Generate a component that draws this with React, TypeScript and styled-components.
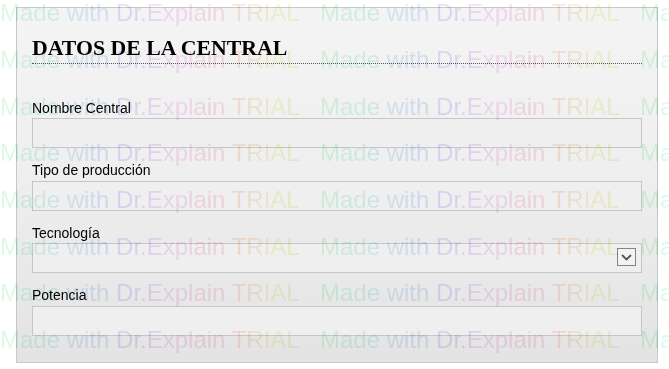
import styled, { createGlobalStyle } from "styled-components"

const GlobalStyle = createGlobalStyle`
  html, body {
    margin: 0;
    padding: 0;
    background: #ffffff;
  }
  body {
    font-family: "Liberation Sans", Arial, sans-serif;
    width: 669px;
    height: 369px;
    overflow: hidden;
    position: relative;
  }
`

const Page = styled.div`
  position: relative;
  width: 669px;
  height: 369px;
  box-sizing: border-box;
  padding-top: 7px;
  padding-left: 16px;
`

const Panel = styled.section`
  box-sizing: border-box;
  width: 642px;
  height: 356px;
  border: 1px solid #c8c8c8;
  background: linear-gradient(180deg, #f4f4f4 0%, #efefef 45%, #e3e3e3 100%);
  padding: 28px 15px 0 15px;
  display: flex;
  flex-direction: column;
`

const Title = styled.h2`
  margin: 0;
  font-family: "Liberation Serif", "Times New Roman", serif;
  font-weight: bold;
  font-size: 21.8px;
  line-height: 25px;
  color: #000;
  padding-bottom: 2px;
  border-bottom: 1px dotted #555555;
`

const Fields = styled.div`
  display: flex;
  flex-direction: column;
  gap: 14.17px;
  margin-top: 35.5px;
`

const Field = styled.div`
  display: flex;
  flex-direction: column;
`

const Label = styled.label`
  font-size: 14px;
  line-height: 16px;
  color: #000;
  margin-bottom: 2.5px;
`

const TextBox = styled.div<{ $select?: boolean }>`
  box-sizing: border-box;
  height: 30px;
  border: 1px solid #c6c6c6;
  background: #efefef;
  display: flex;
  justify-content: flex-end;
  align-items: flex-start;
  padding: ${({ $select }) => ($select ? "4px 5px 0 0" : "0")};
`

const DropButton = styled.div`
  box-sizing: border-box;
  width: 19px;
  height: 18px;
  border: 1px solid #858585;
  background: #f3f3f3;
  display: flex;
  align-items: center;
  justify-content: center;
`

const Watermark = styled.div`
  position: absolute;
  inset: 0;
  overflow: hidden;
  pointer-events: none;
  mix-blend-mode: multiply;
  margin-top: -9.7px;
`

const WmRow = styled.div`
  display: flex;
  height: 46.7px;
  line-height: 46.7px;
  white-space: nowrap;
`

const WmCell = styled.div`
  flex: 0 0 320px;
`

const WmText = styled.span`
  display: inline-block;
  font-family: "Liberation Sans", Arial, sans-serif;
  font-size: 24px;
  background-image: linear-gradient(
    90deg,
    hsl(135, 80%, 92%) 0%,
    hsl(170, 65%, 91%) 14%,
    hsl(212, 75%, 92%) 30%,
    hsl(255, 80%, 93%) 45%,
    hsl(295, 75%, 93%) 57%,
    hsl(345, 80%, 93%) 72%,
    hsl(25, 85%, 92%) 82%,
    hsl(55, 80%, 91%) 92%,
    hsl(90, 75%, 91%) 100%
  );
  -webkit-background-clip: text;
  background-clip: text;
  color: transparent;
`

const fields = [
  { label: "Nombre Central" },
  { label: "Tipo de producción" },
  { label: "Tecnología", select: true },
  { label: "Potencia" },
]

export default function App() {
  const rows = Array.from({ length: 9 })
  const cols = Array.from({ length: 3 })

  return (
    <Page>
      <GlobalStyle />
      <Panel>
        <Title>DATOS DE LA CENTRAL</Title>
        <Fields>
          {fields.map((f) => (
            <Field key={f.label}>
              <Label>{f.label}</Label>
              <TextBox $select={f.select}>
                {f.select && (
                  <DropButton>
                    <svg width="11" height="7" viewBox="0 0 11 7">
                      <polyline
                        points="1,1 5.5,5.5 10,1"
                        fill="none"
                        stroke="#555555"
                        strokeWidth="1.8"
                      />
                    </svg>
                  </DropButton>
                )}
              </TextBox>
            </Field>
          ))}
        </Fields>
      </Panel>
      {/* trial watermark */}
      <Watermark>
        {rows.map((_, r) => (
          <WmRow key={r}>
            {cols.map((_, c) => (
              <WmCell key={c}>
                <WmText>Made with Dr.Explain TRIAL</WmText>
              </WmCell>
            ))}
          </WmRow>
        ))}
      </Watermark>
    </Page>
  )
}
